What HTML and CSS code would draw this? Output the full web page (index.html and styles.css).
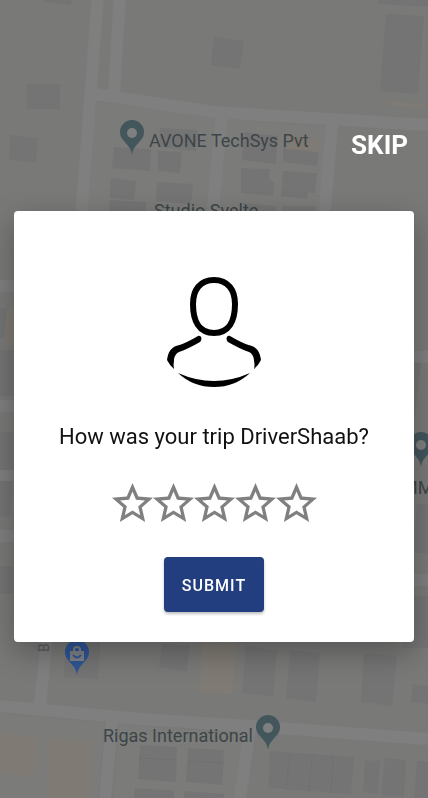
FILE: index.html
```html
<!DOCTYPE html>
<html lang="en">
  <head>
    <meta charset="UTF-8" />
    <meta name="viewport" content="width=device-width, initial-scale=1" />
    <title>Rate your trip</title>
    <link rel="stylesheet" href="styles.css">
  </head>
  <body>
    <!-- dimmed map behind the dialog -->
    <svg class="map" viewBox="0 0 428 798" preserveAspectRatio="xMidYMid slice" aria-hidden="true">
      <defs>
        <g id="pin">
          <path d="M0 21C-1 14-4 12-8 7a12 12 0 1 1 16 0C4 12 1 14 0 21Z" />
        </g>
      </defs>

      <path class="block" d="M97 102L218 117L208 220H80ZM225 118L327 128L320 220H216ZM0 714L104 723L98 798H0ZM119 724L246 735L240 798H114Z" />

      <g class="roads">
        <path d="M98 -5L81 220M120 -5L114 92M94 94L214 112L428 125" />
        <path d="M222 114L212 220M332 124L324 220" />
        <path d="M0 286H20M0 406H20M0 475H20M0 536H20M408 357H428M408 580H428" />
        <path d="M48 630L40 704M0 706L140 719L250 726L428 739M112 722L105 798M250 728L240 798" />
      </g>

      <g class="buildings">
        <path d="M45 -2H72L71 5L45 2ZM27 84H60V109H27ZM10 135L38 138L36 162L9 160Z" />
        <path d="M214 37L244 41L240 69L211 65ZM378 -2H428V7L378 4ZM386 14L424 16L418 94L380 91ZM214 39L210 64Z" />
        <path d="M114 147L151 149L150 171L112 168ZM158 151L182 152L180 173L158 171ZM160 128L198 130L196 151L159 147Z" />
        <path d="M111 178L136 181L134 200L110 198ZM157 182L193 184L191 204L156 201ZM110 200L146 202V212H109Z" />
        <path d="M244 132L278 136L276 164L242 160ZM283 147L319 152L317 166L283 162Z" />
        <path d="M241 168L270 169L269 179L274 183L273 196L241 193ZM283 171L317 173L315 193L308 192L307 199L281 196ZM243 203L276 206V212H243ZM283 206L315 206V212H282Z" />
        <path d="M0 308L7 309L4 338L0 337ZM0 350H14V396H0ZM0 432H14V470H0ZM0 481H13L10 518L0 516ZM0 566H14V594H0Z" />
        <path d="M410 362L421 363L413 430H410ZM417 504H428V553H413ZM414 596H428V648H402Z" />
        <path d="M66 642L100 643L98 679L64 677ZM162 644L190 645L187 671L159 668Z" />
        <path d="M246 646L277 650L273 697L242 693ZM290 650L320 653L316 702L286 698ZM364 653L397 656L392 706L361 702ZM413 684L428 686V704L411 702Z" />
        <path d="M140 745L177 747L176 782L138 779ZM188 748L224 750L222 785L186 782ZM135 788L174 791V798H134ZM184 791L224 794V798H184Z" />
        <path d="M270 751L354 757L351 794L268 788ZM365 760L380 761L378 794L363 792ZM385 758L406 760L404 797L381 795ZM417 761H428V798H414Z" />
        <path class="seam" d="M290 753L286 790M312 755L309 792M333 756L331 793M139 758L176 760M188 761L224 763" />
      </g>

      <path class="shops" d="M288 136L320 139L318 152L286 149ZM391 101L422 104V108L391 106ZM8 308H14V344L5 345ZM0 733L37 737L34 776L0 773ZM50 738L92 742L88 798H46ZM202 642L236 643L232 694L200 691Z" />

      <g class="pin" transform="translate(132 134)"><use href="#pin" /><circle cy="-1" r="5" /></g>
      <g class="pin" transform="translate(421 446)"><use href="#pin" /><circle cy="-1" r="5" /></g>
      <g class="pin" transform="translate(268 729)"><use href="#pin" /><circle cy="-1" r="5" /></g>
      <g class="pin pin-store" transform="translate(77 654)">
        <use href="#pin" />
        <path class="bag" d="M-7 -3H7V7H-7Z" />
        <path class="bag-handle" d="M-3 -3V-4A3 3 0 0 1 3 -4V-3" />
        <path class="bag-smile" d="M-4 1Q0 6 4 1" />
      </g>

      <g class="labels">
        <text x="149" y="147">AVONE TechSys Pvt</text>
        <text x="154" y="217">Studio Svelte</text>
        <text x="103" y="742">Rigas International</text>
        <text x="402" y="494">MM</text>
        <text class="street" transform="translate(49 652) rotate(-90)">B</text>
      </g>
    </svg>

    <main class="screen">
      <button type="button" class="skip">SKIP</button>

      <form class="card">
        <svg class="avatar" viewBox="0 0 94 110" aria-hidden="true">
          <path class="head" d="M47 3C61 3 68 13 68 27C68 44 62 56 47 56C32 56 26 44 26 27C26 13 33 3 47 3Z" />
          <path d="M31 59C34 58 36 62 33 65C26 69 18 73 12 75C8 77 7 81 7 84Q6 88 7 92Q3 89 0 83C1 75 4 71 9 69C17 67 24 63 31 59Z" />
          <path d="M63 59C60 58 58 62 61 65C68 69 76 73 82 75C86 77 87 81 87 84Q88 88 87 92Q91 89 94 83C93 75 90 71 85 69C77 67 70 63 63 59Z" />
          <path d="M11 96Q47 112 83 96Q68 110 47 110Q26 110 11 96Z" />
        </svg>

        <h1 class="question">How was your trip DriverShaab?</h1>

        <div class="stars" role="radiogroup" aria-label="Trip rating">
          <label class="star">
            <input type="radio" name="rating" value="1" aria-label="1 star">
            <svg viewBox="2 2 20 19"><path d="M22 9.24l-7.19-.62L12 2 9.19 8.63 2 9.24l5.46 4.73L5.82 21 12 17.27 18.18 21l-1.63-7.03L22 9.24zM12 15.4l-3.76 2.27 1-4.28-3.32-2.88 4.38-.38L12 6.1l1.71 4.04 4.38.38-3.32 2.88 1 4.28L12 15.4z" /></svg>
          </label>
          <label class="star">
            <input type="radio" name="rating" value="2" aria-label="2 stars">
            <svg viewBox="2 2 20 19"><path d="M22 9.24l-7.19-.62L12 2 9.19 8.63 2 9.24l5.46 4.73L5.82 21 12 17.27 18.18 21l-1.63-7.03L22 9.24zM12 15.4l-3.76 2.27 1-4.28-3.32-2.88 4.38-.38L12 6.1l1.71 4.04 4.38.38-3.32 2.88 1 4.28L12 15.4z" /></svg>
          </label>
          <label class="star">
            <input type="radio" name="rating" value="3" aria-label="3 stars">
            <svg viewBox="2 2 20 19"><path d="M22 9.24l-7.19-.62L12 2 9.19 8.63 2 9.24l5.46 4.73L5.82 21 12 17.27 18.18 21l-1.63-7.03L22 9.24zM12 15.4l-3.76 2.27 1-4.28-3.32-2.88 4.38-.38L12 6.1l1.71 4.04 4.38.38-3.32 2.88 1 4.28L12 15.4z" /></svg>
          </label>
          <label class="star">
            <input type="radio" name="rating" value="4" aria-label="4 stars">
            <svg viewBox="2 2 20 19"><path d="M22 9.24l-7.19-.62L12 2 9.19 8.63 2 9.24l5.46 4.73L5.82 21 12 17.27 18.18 21l-1.63-7.03L22 9.24zM12 15.4l-3.76 2.27 1-4.28-3.32-2.88 4.38-.38L12 6.1l1.71 4.04 4.38.38-3.32 2.88 1 4.28L12 15.4z" /></svg>
          </label>
          <label class="star">
            <input type="radio" name="rating" value="5" aria-label="5 stars">
            <svg viewBox="2 2 20 19"><path d="M22 9.24l-7.19-.62L12 2 9.19 8.63 2 9.24l5.46 4.73L5.82 21 12 17.27 18.18 21l-1.63-7.03L22 9.24zM12 15.4l-3.76 2.27 1-4.28-3.32-2.88 4.38-.38L12 6.1l1.71 4.04 4.38.38-3.32 2.88 1 4.28L12 15.4z" /></svg>
          </label>
        </div>

        <button type="submit" class="submit">SUBMIT</button>
      </form>
    </main>
  </body>
</html>
```

FILE: styles.css
```css
* {
  box-sizing: border-box;
}

body {
  margin: 0;
  font-family: Roboto, Arial, sans-serif;
  background-color: #7b7b78;
}

/* map */
.map {
  position: fixed;
  inset: 0;
  width: 100%;
  height: 100%;
  background: #797a78;
}

.block {
  fill: #7b7c79;
}

.roads {
  fill: none;
  stroke: #7f7f80;
  stroke-width: 12;
}

.buildings {
  fill: #747475;
}

.seam {
  fill: none;
  stroke: #6d6e6f;
  stroke-dasharray: 3 2;
}

.shops {
  fill: #7f7a73;
}

.pin {
  fill: #43565c;
}

.pin circle {
  fill: #7e8080;
}

.pin-store {
  fill: #2f5594;
}

.bag {
  fill: #7e8288;
}

.bag-handle,
.bag-smile {
  fill: none;
  stroke: #7e8288;
  stroke-width: 2;
}

.bag-smile {
  stroke: #2f5594;
}

.labels {
  font-size: 18px;
  fill: #3d4548;
}

.labels .street {
  font-size: 14px;
  fill: #5a5b5c;
}

/* rating dialog */
.screen {
  position: relative;
  display: flex;
  flex-direction: column;
  min-height: 100vh;
  padding: 130px 14px 20px;
}

.skip {
  align-self: flex-end;
  margin-bottom: 51px;
  padding: 0 6px;
  border: 0;
  background: none;
  color: #fff;
  font: bold 26px/30px Roboto, Arial, sans-serif;
  cursor: pointer;
}

.card {
  display: flex;
  flex-direction: column;
  align-items: center;
  padding: 66px 20px 30px;
  background: #fff;
  border-radius: 4px;
  box-shadow: 0 10px 30px rgba(0, 0, 0, 0.3);
}

.avatar {
  width: 94px;
  height: 110px;
}

.head {
  fill: none;
  stroke: #000;
  stroke-width: 6;
}

.question {
  margin: 36px 0 33px;
  color: #111;
  font-size: 22px;
  font-weight: 400;
  line-height: 27px;
  text-align: center;
}

.stars {
  display: flex;
}

.star {
  display: grid;
  cursor: pointer;
}

.star input,
.star svg {
  grid-area: 1 / 1;
  width: 41px;
  height: 39px;
  margin: 0;
}

.star input {
  appearance: none;
}

.star svg {
  fill: #808080;
}

.submit {
  margin-top: 35px;
  padding: 19px 18px 17px;
  border: 0;
  border-radius: 4px;
  background: #233e7e;
  box-shadow: 0 2px 3px rgba(0, 0, 0, 0.25);
  color: #fff;
  font: 500 16px/19px Roboto, Arial, sans-serif;
  letter-spacing: 1px;
  cursor: pointer;
}
```
